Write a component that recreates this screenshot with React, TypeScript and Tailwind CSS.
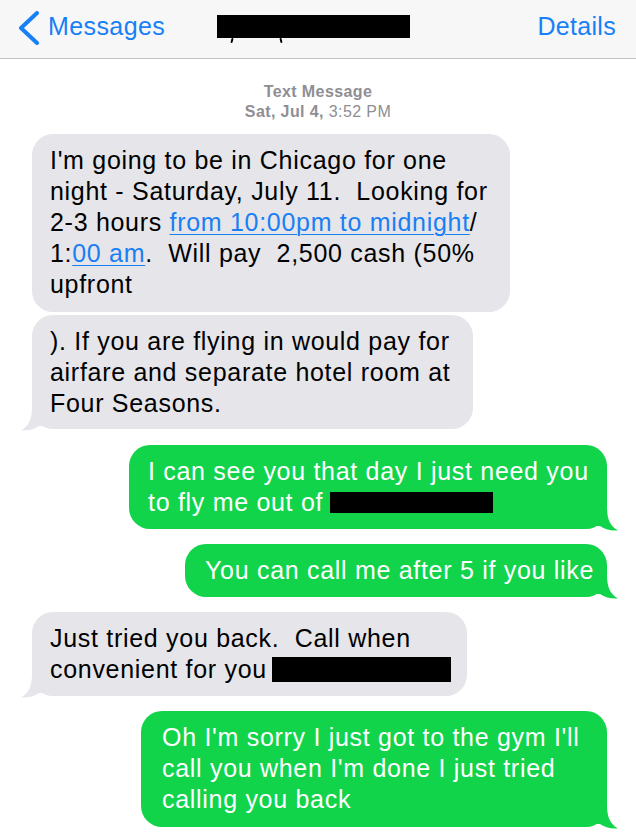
import { FC, ReactNode } from "react";

const GRAY = "#e5e5ea";
const GREEN = "#11d44b";

const Tail: FC<{ side: "left" | "right"; color: string }> = ({ side, color }) => (
  <svg
    width="26"
    height="24"
    viewBox="0 0 26 24"
    className={side === "left" ? "absolute -left-[11px] -bottom-[2px]" : "absolute -right-[11px] -bottom-[2px] -scale-x-100"}
  >
    <path d="M11,0 C11,12 8,19 0,23.5 C8,24 14,22 18,19 L26,19 L26,0 Z" fill={color} />
  </svg>
);

const Bubble: FC<{
  side: "left" | "right";
  tail?: boolean;
  className: string;
  children: ReactNode;
}> = ({ side, tail, className, children }) => {
  const color = side === "left" ? GRAY : GREEN;
  return (
    <div
      className={
        "relative rounded-[21px] text-[25px] leading-[31px] tracking-[0.7px] " +
        (side === "left" ? "bg-[#e5e5ea] text-black self-start " : "bg-[#11d44b] text-white self-end ") +
        className
      }
    >
      {tail && <Tail side={side} color={color} />}
      <div className="relative">{children}</div>
    </div>
  );
};

const Link: FC<{ children: ReactNode }> = ({ children }) => (
  <span className="text-[#1a7ff3] underline decoration-1 underline-offset-[3px]">{children}</span>
);

const Redact: FC<{ className: string }> = ({ className }) => (
  <span className={"inline-block bg-black align-middle " + className} />
);

export default function App() {
  return (
    <div className="w-[636px] h-[836px] overflow-hidden bg-white font-['Liberation_Sans',Arial,sans-serif]">
      {/* nav bar */}
      <div className="relative h-[59px] bg-[#f7f7f8] border-b border-[#c4c4c8] flex items-center">
        <div className="flex items-center pl-[17px] text-[#187ff5]">
          <svg width="24" height="34" viewBox="0 0 24 34" className="mt-[-2px]">
            <polyline points="20,2 4,17 20,32" fill="none" stroke="#187ff5" strokeWidth="4" strokeLinecap="round" strokeLinejoin="round" />
          </svg>
          <span className="ml-[7px] text-[25px] tracking-[0.4px] mt-[-5px]">Messages</span>
        </div>
        <div className="absolute left-[217px] top-[15px] w-[193px] h-[23px] bg-black" />
        <span className="absolute left-[231px] top-[38px] w-[2px] h-[5px] bg-black rounded-full rotate-[15deg]" />
        <span className="absolute left-[280px] top-[38px] w-[2px] h-[5px] bg-black rounded-full -rotate-[15deg]" />
        <span className="ml-auto pr-[20px] text-[25px] tracking-[0.3px] text-[#187ff5] mt-[-5px]">Details</span>
      </div>

      {/* timestamp */}
      <div className="mt-[23px] text-center text-[16px] leading-[20px] text-[#8e8e93] tracking-[0.4px]">
        <div className="font-bold">Text Message</div>
        <div>
          <span className="font-bold">Sat, Jul 4,</span> 3:52 PM
        </div>
      </div>

      <div className="flex flex-col px-[32px] mt-[12px]">
        <Bubble side="left" className="w-[478px] pl-[18px] pt-[11px] pb-[12px]">
          <div>I'm going to be in Chicago for one</div>
          <div>night - Saturday, July 11.&nbsp; Looking for</div>
          <div>
            2-3 hours <Link>from 10:00pm to midnight</Link>/
          </div>
          <div>
            1:<Link>00 am</Link>.&nbsp; Will pay&nbsp; 2,500 cash (50%
          </div>
          <div>upfront</div>
        </Bubble>

        <Bubble side="left" tail className="mt-[3px] w-[441px] pl-[18px] pt-[11px] pb-[10px]">
          <div>). If you are flying in would pay for</div>
          <div>airfare and separate hotel room at</div>
          <div>Four Seasons.</div>
        </Bubble>

        <Bubble side="right" tail className="mt-[16px] mr-[-3px] w-[478px] pl-[19px] pt-[11px] pb-[11px] tracking-[0.5px]">
          <div>I can see you that day I just need you</div>
          <div>
            to fly me out of <Redact className="w-[163px] h-[21px] mt-[-4px] -ml-[1px]" />
          </div>
        </Bubble>

        <Bubble side="right" tail className="mt-[15px] mr-[-3px] w-[422px] pl-[20px] pt-[11px] pb-[11px] tracking-[0.5px]">
          <div>You can call me after 5 if you like</div>
        </Bubble>

        <Bubble side="left" tail className="mt-[15px] w-[435px] pl-[18px] pt-[11px] pb-[11px]">
          <div>Just tried you back.&nbsp; Call when</div>
          <div>
            convenient for you <Redact className="w-[179px] h-[25px] mt-[-3px] -ml-[3px]" />
          </div>
        </Bubble>

        <Bubble side="right" tail className="mt-[15px] mr-[-3px] w-[466px] pl-[21px] pt-[11px] pb-[12px]">
          <div>Oh I'm sorry I just got to the gym I'll</div>
          <div>call you when I'm done I just tried</div>
          <div>calling you back</div>
        </Bubble>
      </div>
    </div>
  );
}
